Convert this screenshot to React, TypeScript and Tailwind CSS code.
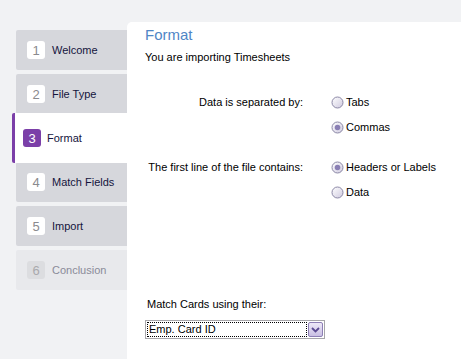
import React from "react";

const font = { fontFamily: '"Liberation Sans", Arial, sans-serif' };

function Radio({ checked }: { checked?: boolean }) {
  return (
    <svg width="13" height="13" viewBox="0 0 13 13" className="shrink-0">
      <defs>
        <linearGradient id={checked ? "rg1" : "rg0"} x1="0" y1="0" x2="1" y2="1">
          <stop offset="0" stopColor="#ffffff" />
          <stop offset="1" stopColor="#cfcadf" />
        </linearGradient>
      </defs>
      <circle cx="6.5" cy="6.5" r="5.5" fill={`url(#${checked ? "rg1" : "rg0"})`} stroke="#8c88a6" strokeWidth="1" />
      {checked && <circle cx="6.5" cy="6.5" r="2.8" fill="#8a7fb4" />}
    </svg>
  );
}

function RadioRow({ label, checked }: { label: string; checked?: boolean }) {
  return (
    <div className="flex items-center gap-[2px] h-[14px]">
      <Radio checked={checked} />
      <span className="text-[11px] text-black leading-none">{label}</span>
    </div>
  );
}

const steps = [
  { n: 1, label: "Welcome" },
  { n: 2, label: "File Type" },
  { n: 3, label: "Format", active: true },
  { n: 4, label: "Match Fields" },
  { n: 5, label: "Import" },
  { n: 6, label: "Conclusion", disabled: true },
];

export default function App() {
  return (
    <div className="w-[461px] h-[359px] bg-[#f1f2f4] flex overflow-hidden" style={font}>
      <div className="w-[127px] shrink-0 pt-[30px] pl-[16px] flex flex-col gap-[4px]">
        {steps.map((s) =>
          s.active ? (
            <div
              key={s.n}
              className="relative z-10 -my-[5px] -ml-[4px] h-[50px] bg-white border-l-[3px] border-[#7b3fa8] rounded-l-[2px] flex items-center pl-[8px]"
            >
              <div className="w-[18px] h-[18px] rounded-[3px] bg-[#7b3fa8] text-white text-[13px] flex items-center justify-center leading-none">
                {s.n}
              </div>
              <span className="ml-[6px] text-[11px] text-[#14143c]">{s.label}</span>
            </div>
          ) : (
            <div
              key={s.n}
              className={`h-[40px] rounded-l-[2px] flex items-center pl-[11px] ${s.disabled ? "bg-[#e8e9ec]" : "bg-[#d6d7dc]"}`}
            >
              <div
                className={`w-[18px] h-[18px] rounded-[3px] text-[13px] flex items-center justify-center leading-none ${s.disabled ? "bg-[#dcdde0] text-[#a9a9ad]" : "bg-white text-[#8a8a8e]"}`}
              >
                {s.n}
              </div>
              <span className={`ml-[7px] text-[11px] ${s.disabled ? "text-[#8a8b99]" : "text-[#14143c]"}`}>{s.label}</span>
            </div>
          )
        )}
      </div>
      <div className="flex-1 mt-[22px] bg-white rounded-tl-[5px] flex flex-col pl-[18px]">
        <div className="text-[15px] text-[#4f86c6] leading-none mt-[5px]">Format</div>
        <div className="text-[11px] text-black leading-none mt-[10px]">You are importing Timesheets</div>
        <div className="flex mt-[32px]">
          <div className="w-[158px] text-right text-[11px] text-black leading-[14px]">Data is separated by:</div>
          <div className="ml-[28px] flex flex-col gap-[11px]">
            <RadioRow label="Tabs" />
            <RadioRow label="Commas" checked />
          </div>
        </div>
        <div className="flex mt-[26px]">
          <div className="w-[158px] text-right text-[11px] text-black leading-[14px]">The first line of the file contains:</div>
          <div className="ml-[28px] flex flex-col gap-[11px]">
            <RadioRow label="Headers or Labels" checked />
            <RadioRow label="Data" />
          </div>
        </div>
        <div className="text-[11px] text-black leading-none mt-[100px] ml-[2px]">Match Cards using their:</div>
        <div className="mt-[10px] w-[180px] h-[19px] border border-[#a7a6aa] bg-white flex items-center p-[1px]">
          <div className="flex-1 h-full border border-dotted border-black flex items-center pl-[1px] text-[11px] text-black leading-none">
            Emp. Card ID
          </div>
          <div className="ml-[1px] w-[15px] h-[15px] rounded-[2px] border border-[#8d7fb5] bg-gradient-to-b from-[#eee9f8] to-[#c9bfe3] flex items-center justify-center">
            <svg width="9" height="6" viewBox="0 0 9 6">
              <path d="M1 1 L4.5 4.5 L8 1" fill="none" stroke="#5b4a92" strokeWidth="1.8" />
            </svg>
          </div>
        </div>
      </div>
    </div>
  );
}
